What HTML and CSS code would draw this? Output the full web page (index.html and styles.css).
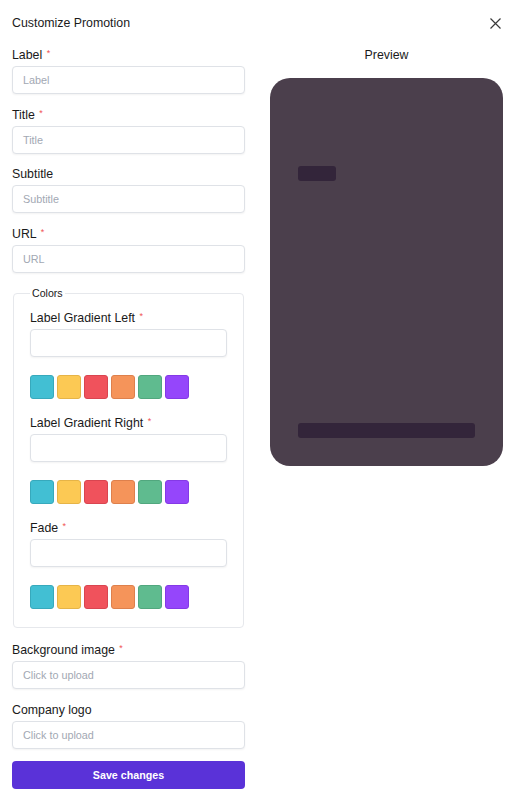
FILE: index.html
```html
<!DOCTYPE html>
<html>
<head>
<meta charset="utf-8">
<link rel="stylesheet" href="styles.css">
</head>
<body>
<div class="dialog">
  <div class="header">
    <h1 class="title">Customize Promotion</h1>
    <button class="close" aria-label="Close">
      <svg width="11" height="11" viewBox="0 0 11 11"><path d="M0.5 0.5 L10.5 10.5 M10.5 0.5 L0.5 10.5" stroke="#3a3a3a" stroke-width="1.2" fill="none"/></svg>
    </button>
  </div>
  <div class="body">
    <form class="form">
      <div class="field">
        <label class="label">Label <span class="req">*</span></label>
        <div class="input placeholder">Label</div>
      </div>
      <div class="field">
        <label class="label">Title <span class="req">*</span></label>
        <div class="input placeholder">Title</div>
      </div>
      <div class="field">
        <label class="label">Subtitle</label>
        <div class="input placeholder">Subtitle</div>
      </div>
      <div class="field">
        <label class="label">URL <span class="req">*</span></label>
        <div class="input placeholder">URL</div>
      </div>
      <fieldset class="colors">
        <legend class="legend">Colors</legend>
        <div class="color-group">
          <label class="label">Label Gradient Left <span class="req">*</span></label>
          <div class="input"></div>
          <div class="swatches">
            <span class="sw cyan"></span><span class="sw yellow"></span><span class="sw red"></span><span class="sw orange"></span><span class="sw green"></span><span class="sw purple"></span>
          </div>
        </div>
        <div class="color-group">
          <label class="label">Label Gradient Right <span class="req">*</span></label>
          <div class="input"></div>
          <div class="swatches">
            <span class="sw cyan"></span><span class="sw yellow"></span><span class="sw red"></span><span class="sw orange"></span><span class="sw green"></span><span class="sw purple"></span>
          </div>
        </div>
        <div class="color-group">
          <label class="label">Fade <span class="req">*</span></label>
          <div class="input"></div>
          <div class="swatches">
            <span class="sw cyan"></span><span class="sw yellow"></span><span class="sw red"></span><span class="sw orange"></span><span class="sw green"></span><span class="sw purple"></span>
          </div>
        </div>
      </fieldset>
      <div class="field">
        <label class="label">Background image <span class="req">*</span></label>
        <div class="input placeholder">Click to upload</div>
      </div>
      <div class="field">
        <label class="label">Company logo</label>
        <div class="input placeholder">Click to upload</div>
      </div>
      <button type="button" class="save">Save changes</button>
    </form>
    <div class="preview">
      <div class="preview-title">Preview</div>
      <div class="card">
        <div class="chip"></div>
        <div class="bar"></div>
      </div>
    </div>
  </div>
</div>
</body>
</html>
```
FILE: styles.css
```css
* { box-sizing: border-box; }
html, body { margin: 0; padding: 0; background: #fff; }
body {
  font-family: "Liberation Sans", Arial, sans-serif;
  color: #1a1a1a;
  font-size: 12.35px;
}
.dialog {
  width: 515px;
  padding: 14px 12px 0 12px;
}
.header {
  display: flex;
  justify-content: space-between;
  align-items: center;
  height: 16px;
}
.title {
  margin: 0;
  font-size: 12.35px;
  font-weight: normal;
  line-height: 16px;
  color: #1a1a1a;
  padding-top: 1px;
}
.close {
  border: 0;
  background: none;
  padding: 0;
  margin-right: 2px;
  margin-top: 2px;
  width: 11px;
  height: 11px;
  display: flex;
}
.body {
  display: flex;
  gap: 25px;
  margin-top: 17px;
}
.form {
  width: 233px;
  display: flex;
  flex-direction: column;
  margin: 0;
}
.field {
  display: flex;
  flex-direction: column;
  gap: 3px;
  margin-bottom: 12.5px;
}
.label {
  display: block;
  height: 16px;
  line-height: 16px;
  font-size: 12.35px;
  color: #1a1a1a;
}
.req {
  color: #f05252;
  font-size: 9px;
  line-height: 0;
  vertical-align: 3px;
  margin-left: 1px;
}
.input {
  height: 28px;
  border: 1px solid #dfe2e7;
  border-radius: 4px;
  background: #fff;
  box-shadow: 0 1px 2px rgba(0,0,0,0.05);
  font-size: 10.8px;
  line-height: 26px;
  padding: 0 10px;
}
.placeholder { color: #a2a8b3; }
.colors {
  margin: 2px 1px 14px 1px;
  border: 1px solid #e6e8ec;
  border-radius: 4px;
  padding: 10px 16px 18px 16px;
  display: flex;
  flex-direction: column;
}
.legend {
  font-size: 10.6px;
  line-height: 13px;
  padding: 0 2px;
  color: #1a1a1a;
}
.color-group {
  display: flex;
  flex-direction: column;
  gap: 3px;
  margin-bottom: 16px;
}
.color-group:last-child { margin-bottom: 0; }
.swatches {
  display: flex;
  gap: 3px;
  margin-top: 15px;
}
.sw {
  width: 24px;
  height: 24px;
  border-radius: 3px;
  border: 1px solid rgba(0,0,0,0.12);
}
.cyan { background: #42bfd3; border-color: #37a9bc; }
.yellow { background: #fcc954; border-color: #e6b447; }
.red { background: #f0525c; border-color: #d94550; }
.orange { background: #f5945a; border-color: #de804c; }
.green { background: #5fbb8f; border-color: #51a77e; }
.purple { background: #9546fb; border-color: #8439e6; }
.save {
  height: 28px;
  border: 0;
  border-radius: 4px;
  background: #5a32d8;
  color: #fff;
  font-family: "Liberation Sans", Arial, sans-serif;
  font-weight: bold;
  font-size: 10.7px;
  padding: 0;
}
.preview {
  width: 233px;
  display: flex;
  flex-direction: column;
}
.preview-title {
  text-align: center;
  line-height: 16px;
  margin-bottom: 15px;
}
.card {
  height: 388px;
  border-radius: 20px;
  background: #4b3f4c;
  display: flex;
  flex-direction: column;
  padding: 88px 28px 28px 28px;
  justify-content: space-between;
}
.chip {
  width: 38px;
  height: 15px;
  border-radius: 3px;
  background: #33253a;
}
.bar {
  height: 15px;
  border-radius: 3px;
  background: #33253a;
}
```
